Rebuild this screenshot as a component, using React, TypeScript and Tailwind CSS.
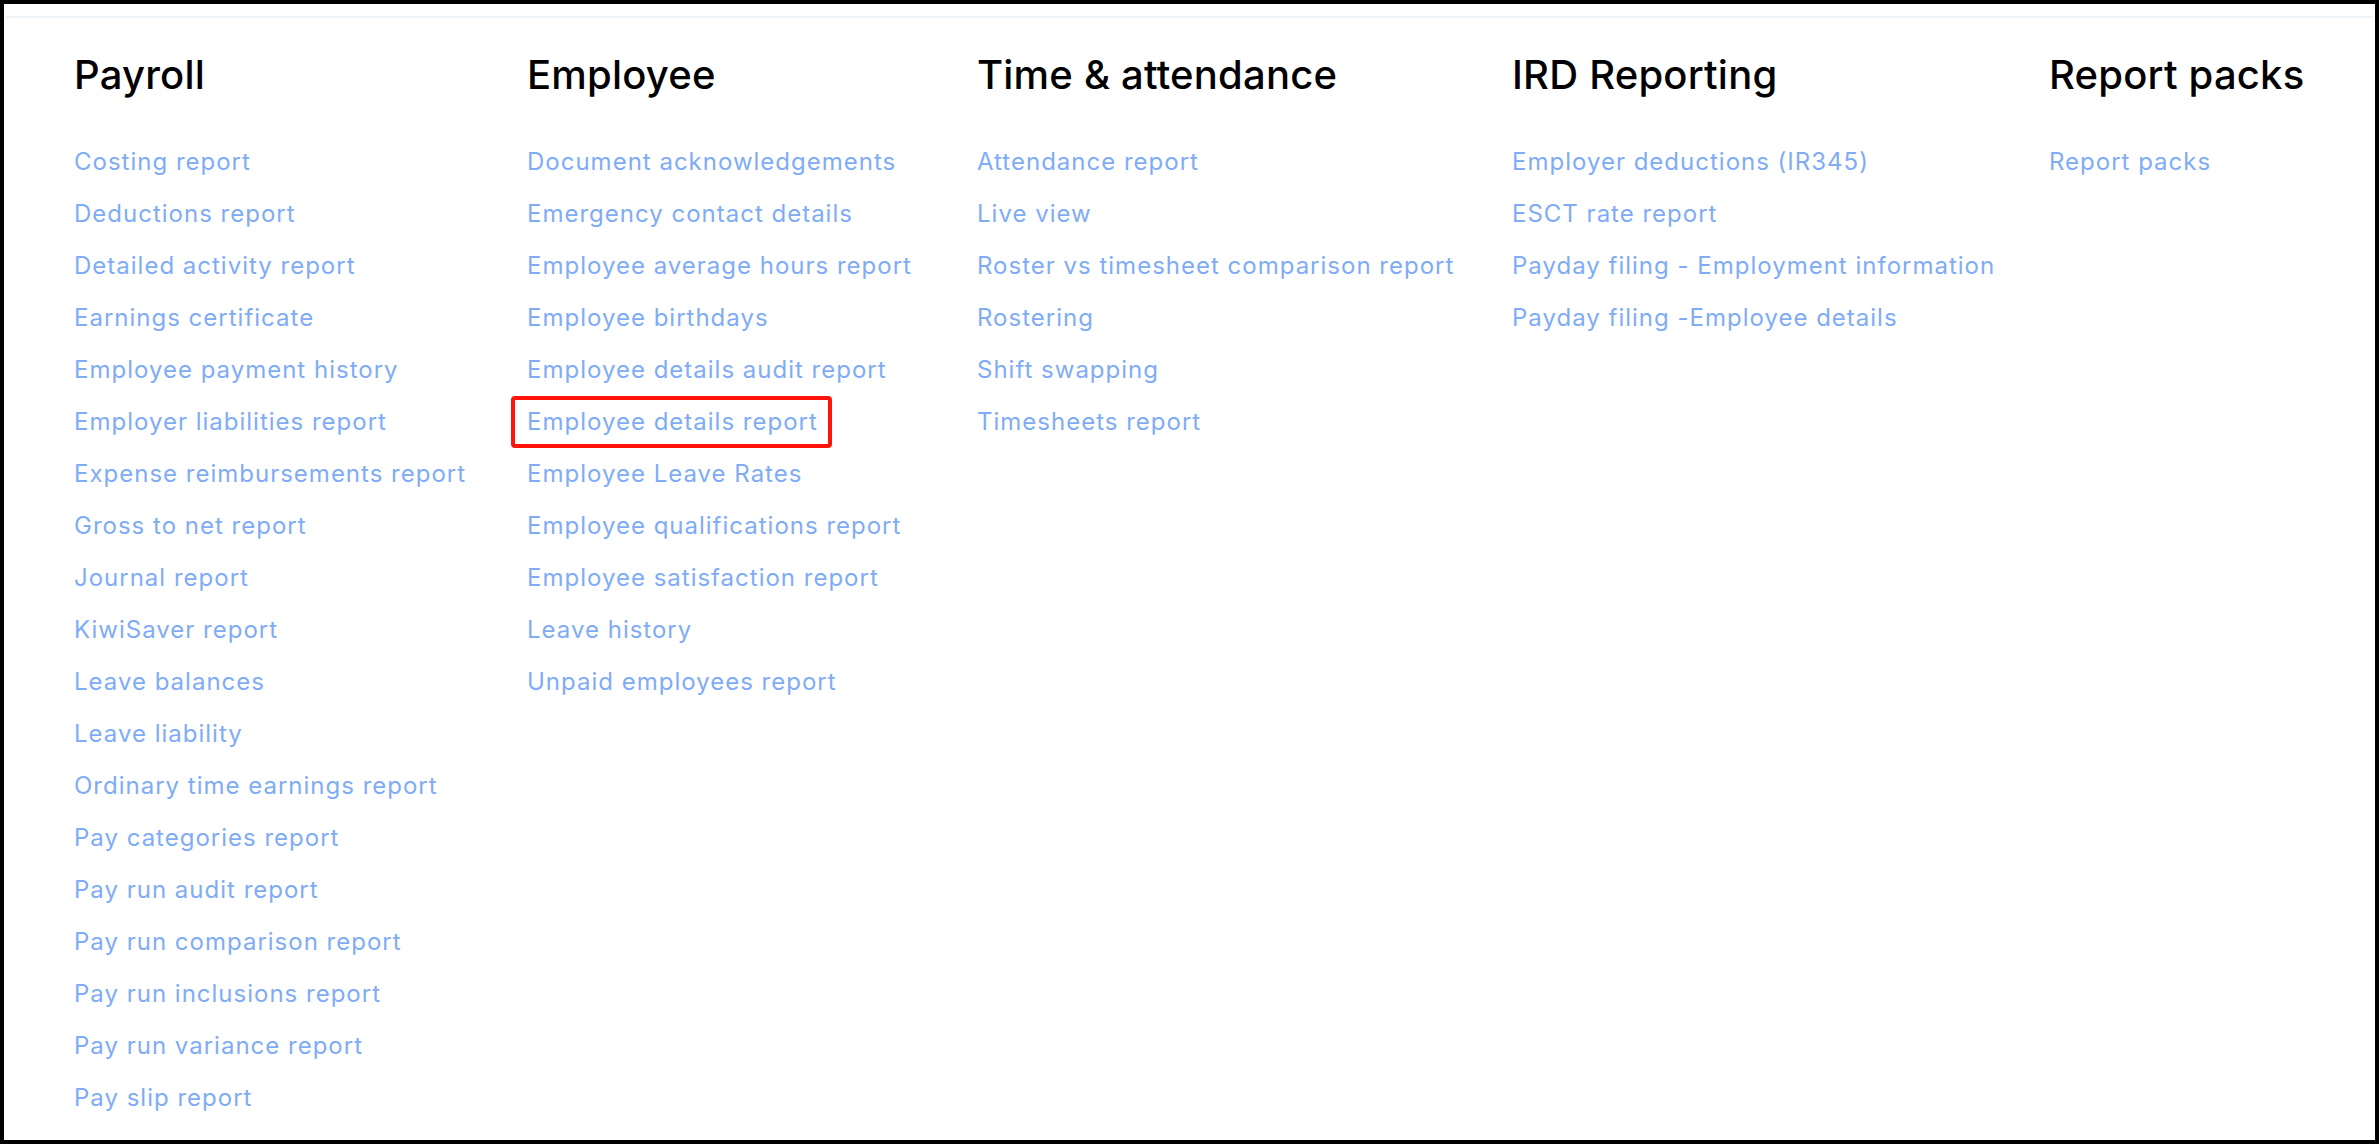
import React from 'react';

type Column = {
  title: string;
  links: string[];
};

const columns: Column[] = [
  {
    title: 'Payroll',
    links: [
      'Costing report',
      'Deductions report',
      'Detailed activity report',
      'Earnings certificate',
      'Employee payment history',
      'Employer liabilities report',
      'Expense reimbursements report',
      'Gross to net report',
      'Journal report',
      'KiwiSaver report',
      'Leave balances',
      'Leave liability',
      'Ordinary time earnings report',
      'Pay categories report',
      'Pay run audit report',
      'Pay run comparison report',
      'Pay run inclusions report',
      'Pay run variance report',
      'Pay slip report',
    ],
  },
  {
    title: 'Employee',
    links: [
      'Document acknowledgements',
      'Emergency contact details',
      'Employee average hours report',
      'Employee birthdays',
      'Employee details audit report',
      'Employee details report',
      'Employee Leave Rates',
      'Employee qualifications report',
      'Employee satisfaction report',
      'Leave history',
      'Unpaid employees report',
    ],
  },
  {
    title: 'Time & attendance',
    links: [
      'Attendance report',
      'Live view',
      'Roster vs timesheet comparison report',
      'Rostering',
      'Shift swapping',
      'Timesheets report',
    ],
  },
  {
    title: 'IRD Reporting',
    links: [
      'Employer deductions (IR345)',
      'ESCT rate report',
      'Payday filing - Employment information',
      'Payday filing -Employee details',
    ],
  },
  {
    title: 'Report packs',
    links: ['Report packs'],
  },
];

// the one link the screenshot has boxed in red
const HIGHLIGHTED = 'Employee details report';

const ReportLink = ({ label }: { label: string }) => {
  const highlighted = label === HIGHLIGHTED;
  return (
    <a href="#" className="block h-[52px] leading-[52px] text-[24px] tracking-[1px] text-[#80acf6] whitespace-nowrap">
      <span className="relative inline-block">
        {label}
        {highlighted && (
          <span className="absolute -left-[16px] -right-[14px] top-0 bottom-0 border-4 border-[#ff140a] rounded-[4px]" />
        )}
      </span>
    </a>
  );
};

export default function App() {
  return (
    <div
      className="w-[2379px] h-[1144px] bg-white border-4 border-black overflow-hidden"
      style={{ fontFamily: 'Inter, "Liberation Sans", sans-serif' }}
    >
      {/* thin divider under the (cropped) page header */}
      <div className="mt-[12px] mx-[2px] h-[2px] bg-[#eef3f8]" />

      <div className="pl-[70px] pt-[33px] grid grid-cols-[453px_450px_535px_537px_1fr]">
        {columns.map((col) => (
          <div key={col.title} className="flex flex-col">
            <h2 className="text-[40px] leading-[48px] font-medium tracking-[0.2px] text-black whitespace-nowrap">{col.title}</h2>
            <div className="mt-[37px] flex flex-col">
              {col.links.map((link) => (
                <ReportLink key={link} label={link} />
              ))}
            </div>
          </div>
        ))}
      </div>
    </div>
  );
}
